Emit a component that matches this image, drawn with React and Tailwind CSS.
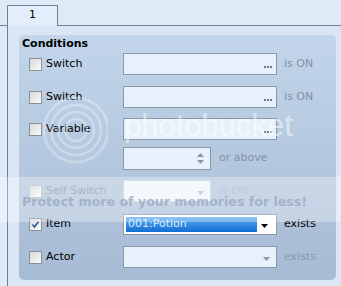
const font = { fontFamily: '"DejaVu Sans", Verdana, sans-serif' }

function Check({ checked, dim }) {
return (
<span className={`w-[13px] h-[13px] border ${dim ? "border-[#b7c0c8]" : "border-[#8c9196]"} bg-gradient-to-br from-[#d8d8d8] to-[#fbfbfb] flex items-center justify-center shrink-0`}>
{checked && (
<svg width="9" height="9" viewBox="0 0 9 9">
<path d="M1.5 4.5 L3.5 7 L7.5 1.5" stroke="#3a4fa0" strokeWidth="1.6" fill="none" />
</svg>
)}
</span>
)
}

function Dots() {
return (
<span className="flex gap-[1px] mr-[4px] mt-[5px]">
<i className="w-[2px] h-[2px] bg-[#6f7b8c]"></i>
<i className="w-[2px] h-[2px] bg-[#6f7b8c]"></i>
<i className="w-[2px] h-[2px] bg-[#6f7b8c]"></i>
</span>
)
}

function Arrow({ color = "#8b96a5" }) {
return (
<svg width="7" height="4" viewBox="0 0 7 4" className="mr-[6px] mt-[3px]">
<path d="M0 0 L7 0 L3.5 4 Z" fill={color} />
</svg>
)
}

function Row({ label, dim, checked, children, mt }) {
return (
<div className={`flex items-center h-[22px] ${mt}`}>
<div className="w-[104px] pl-[10px] flex items-center gap-[4px]">
<Check checked={checked} dim={dim} />
<span className={dim ? "text-[#8a96a8]" : "text-black"}>{label}</span>
</div>
{children}
</div>
)
}

export default function App() {
return (
<div className="w-[341px] h-[286px] bg-[#dfeaf7] relative overflow-hidden text-[11px]" style={font}>

{/* TABS */}
<div className="flex h-[26px] pt-[5px]">
<div className="w-[7px] border-b border-[#6e7f96]"></div>
<div className="w-[51px] border border-b-0 border-[#6e7f96] bg-[#e4eefa] flex items-center justify-center pb-[2px]">1</div>
<div className="flex-1 border-b border-[#6e7f96]"></div>
</div>

{/* PANEL */}
<div className="ml-[7px] border-l border-[#6e7f96] bg-[#dae6f4] h-[260px] pt-[9px] pl-[11px] pr-[5px]">

<div className="rounded-[5px] bg-gradient-to-b from-[#c2d5ea] to-[#a6bbd4] h-[245px] pt-[2px] flex flex-col">

<div className="font-bold pl-[3px] h-[14px] leading-[14px]">Conditions</div>

<Row label="Switch" mt="mt-[2px]">
<div className="w-[154px] h-[22px] border border-[#8a98aa] bg-[#e7f1fc] flex items-center justify-end"><Dots /></div>
<span className="ml-[7px] text-[#8591a4]">is ON</span>
</Row>

<Row label="Switch" mt="mt-[11px]">
<div className="w-[154px] h-[22px] border border-[#8a98aa] bg-[#e7f1fc] flex items-center justify-end"><Dots /></div>
<span className="ml-[7px] text-[#8591a4]">is ON</span>
</Row>

<Row label="Variable" mt="mt-[10px]">
<div className="w-[154px] h-[22px] border border-[#8a98aa] bg-[#e7f1fc] flex items-center justify-end"><Dots /></div>
</Row>

<div className="flex items-center h-[23px] pl-[104px] mt-[7px]">
<div className="w-[88px] h-[23px] border border-[#8a98aa] bg-[#e7f1fc] flex flex-col items-end justify-center gap-[3px] pr-[6px]">
<svg width="7" height="4" viewBox="0 0 7 4"><path d="M0 4 L7 4 L3.5 0 Z" fill="#8b96a5" /></svg>
<svg width="7" height="4" viewBox="0 0 7 4"><path d="M0 0 L7 0 L3.5 4 Z" fill="#8b96a5" /></svg>
</div>
<span className="ml-[8px] text-[#8591a4]">or above</span>
</div>

<Row label="Self Switch" dim mt="mt-[10px]">
<div className="w-[88px] h-[22px] border border-[#c5d2e0] bg-[#eef5fd] flex items-center justify-end"><Arrow color="#b5bfcc" /></div>
<span className="ml-[8px] text-[#a7b4c6]">is ON</span>
</Row>

<Row label="Item" checked mt="mt-[11px]">
<div className="w-[154px] h-[21px] border border-[#8a98aa] bg-white flex items-center p-[2px]">
<div className="w-[131px] h-full bg-gradient-to-b from-[#5aa9ee] to-[#0b6ed3] text-[#d8ecff] flex items-center pl-[2px]">001:Potion</div>
<div className="flex-1 flex justify-end"><Arrow color="#000" /></div>
</div>
<span className="ml-[7px] text-black">exists</span>
</Row>

<Row label="Actor" mt="mt-[11px]">
<div className="w-[154px] h-[22px] border border-[#8a98aa] bg-[#e7f1fc] flex items-center justify-end"><Arrow /></div>
<span className="ml-[7px] text-[#8d9ab0]">exists</span>
</Row>

</div>
</div>

{/* WATERMARK */}
<div className="absolute left-0 right-0 top-[177px] h-[45px] bg-white/30"></div>
<div className="absolute left-[22px] top-[194px] text-[12.6px] leading-[15px] font-bold whitespace-nowrap text-[#9aa9c2]/80">Protect more of your memories for less!</div>
<div className="absolute left-[124px] top-[108px] text-[31px] leading-[36px] whitespace-nowrap text-white/50" style={{ fontFamily: '"Liberation Sans", Arial, sans-serif' }}>photobucket</div>
<svg className="absolute left-[38px] top-[82px]" width="70" height="90" viewBox="0 0 70 90">
{[32, 25, 18, 11].map(r => (
<circle key={r} cx="38" cy="48" r={r} stroke="white" strokeOpacity="0.3" strokeWidth="2.5" fill="none" />
))}
</svg>

</div>
)
}
